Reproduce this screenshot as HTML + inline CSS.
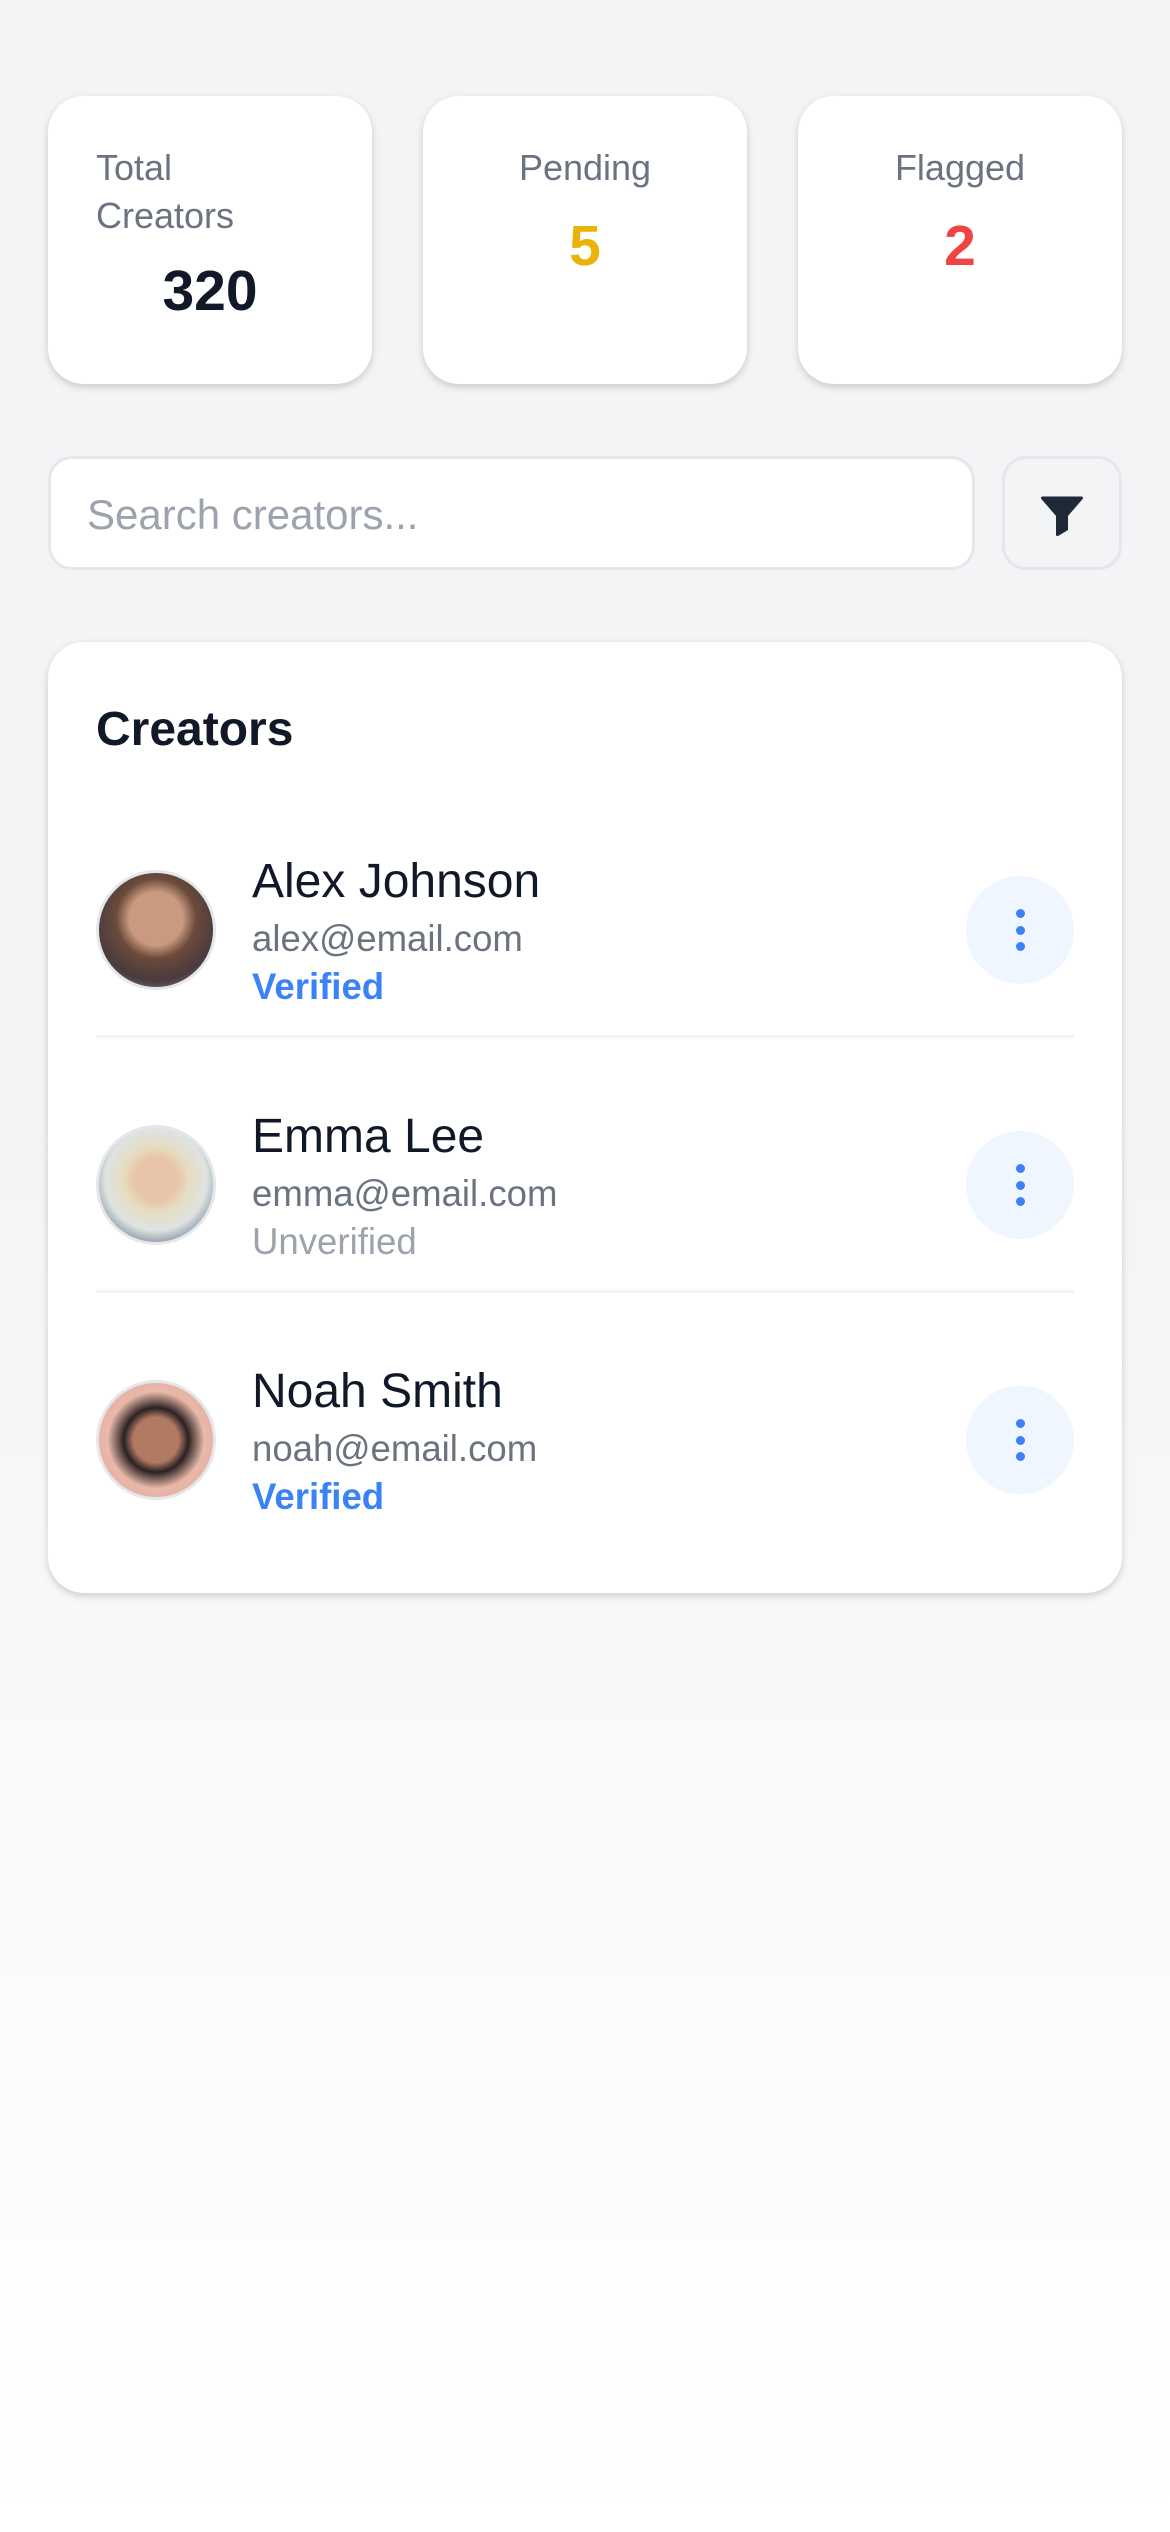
<!DOCTYPE html>
<html><head><meta charset="utf-8"><style>
html,body{margin:0;padding:0}
body{width:1170px;height:2532px;overflow:hidden;background:linear-gradient(#f3f4f6 0,#f3f4f6 1100px,#ffffff 2532px);font-family:"Liberation Sans",sans-serif}
#w{zoom:3;width:390px;height:844px;position:relative}
.card{position:absolute;background:#fff;border-radius:12px;box-shadow:0 1px 3px rgba(0,0,0,.12),0 1px 2px rgba(0,0,0,.06)}
.stat{top:32px;height:96px;width:108px;text-align:center}
.lab{font-size:12px;color:#6b7280;line-height:16px}
.val{font-size:19px;font-weight:bold;line-height:24px}
.search{position:absolute;left:16px;top:152px;width:309px;height:38px;background:#fff;border:1px solid #e5e7eb;border-radius:8px;box-sizing:border-box;font-size:14px;color:#9ca3af;line-height:37px;padding-left:12px}
.filter{position:absolute;left:334px;top:152px;width:40px;height:38px;background:#f3f4f6;border:1px solid #e5e7eb;border-radius:8px;box-sizing:border-box}
.row{position:absolute;left:16px;width:326px;height:85px}
.av{position:absolute;left:0;top:20px;width:38px;height:38px;border-radius:50%;border:1px solid #e5e7eb;overflow:hidden}
.nm{position:absolute;left:52px;top:14px;font-size:16px;color:#111827;line-height:20px}
.em{position:absolute;left:52px;top:35px;font-size:12.2px;color:#6b7280;line-height:16px}
.st{position:absolute;left:52px;top:51px;font-size:12.2px;line-height:16px}
.kb{position:absolute;right:0;top:22px;width:36px;height:36px;border-radius:50%;background:#eff6ff}
.kb i{position:absolute;left:16.5px;width:3px;height:3px;border-radius:50%;background:#3b82f6}
.div{position:absolute;left:16px;width:326px;height:1px;background:#f3f4f6}
</style></head><body><div id="w">
<div class="card stat" style="left:16px">
 <div class="lab" style="text-align:left;padding:16px 16px 0">Total<br>Creators</div>
 <div class="val" style="color:#111827;margin-top:5px">320</div>
</div>
<div class="card stat" style="left:141px">
 <div class="lab" style="padding-top:16px">Pending</div>
 <div class="val" style="color:#eab308;margin-top:6px">5</div>
</div>
<div class="card stat" style="left:266px">
 <div class="lab" style="padding-top:16px">Flagged</div>
 <div class="val" style="color:#ef4444;margin-top:6px">2</div>
</div>
<div class="search">Search creators...</div>
<div class="filter"><svg width="40" height="38" viewBox="0 0 40 38" style="position:absolute;left:-1px;top:-1px"><path d="M13.5 14h13l-5 5.8v4.6l-3 1.8v-6.4z" fill="#1f2937" stroke="#1f2937" stroke-width="1" stroke-linejoin="round"/></svg></div>
<div class="card" style="left:16px;top:214px;width:358px;height:317px">
 <div style="position:absolute;left:16px;top:20px;font-size:16px;font-weight:bold;color:#111827">Creators</div>
 <div class="row" style="top:56px">
  <div class="av" style="background:radial-gradient(circle at 50% 40%,#c99a80 0 30%,#6b4a3a 45%,#4a3a3e 70%,#9aa3a8 100%)"></div>
  <div class="nm">Alex Johnson</div><div class="em">alex@email.com</div><div class="st" style="color:#3b82f6;font-weight:bold">Verified</div>
  <div class="kb"><i style="top:11px"></i><i style="top:16.5px"></i><i style="top:22px"></i></div>
 </div>
 <div class="div" style="top:131px"></div>
 <div class="row" style="top:141px">
  <div class="av" style="background:radial-gradient(circle at 50% 45%,#e8c4a8 0 25%,#e6dcc0 38%,#dfe3e2 60%,#1f3a5a 100%)"></div>
  <div class="nm">Emma Lee</div><div class="em">emma@email.com</div><div class="st" style="color:#9ca3af">Unverified</div>
  <div class="kb"><i style="top:11px"></i><i style="top:16.5px"></i><i style="top:22px"></i></div>
 </div>
 <div class="div" style="top:216px"></div>
 <div class="row" style="top:226px">
  <div class="av" style="background:radial-gradient(circle at 50% 50%,#b07a62 0 28%,#2a2222 40%,#e8b8a8 60%,#e0a8a0 100%)"></div>
  <div class="nm">Noah Smith</div><div class="em">noah@email.com</div><div class="st" style="color:#3b82f6;font-weight:bold">Verified</div>
  <div class="kb"><i style="top:11px"></i><i style="top:16.5px"></i><i style="top:22px"></i></div>
 </div>
</div>
</div></body></html>
